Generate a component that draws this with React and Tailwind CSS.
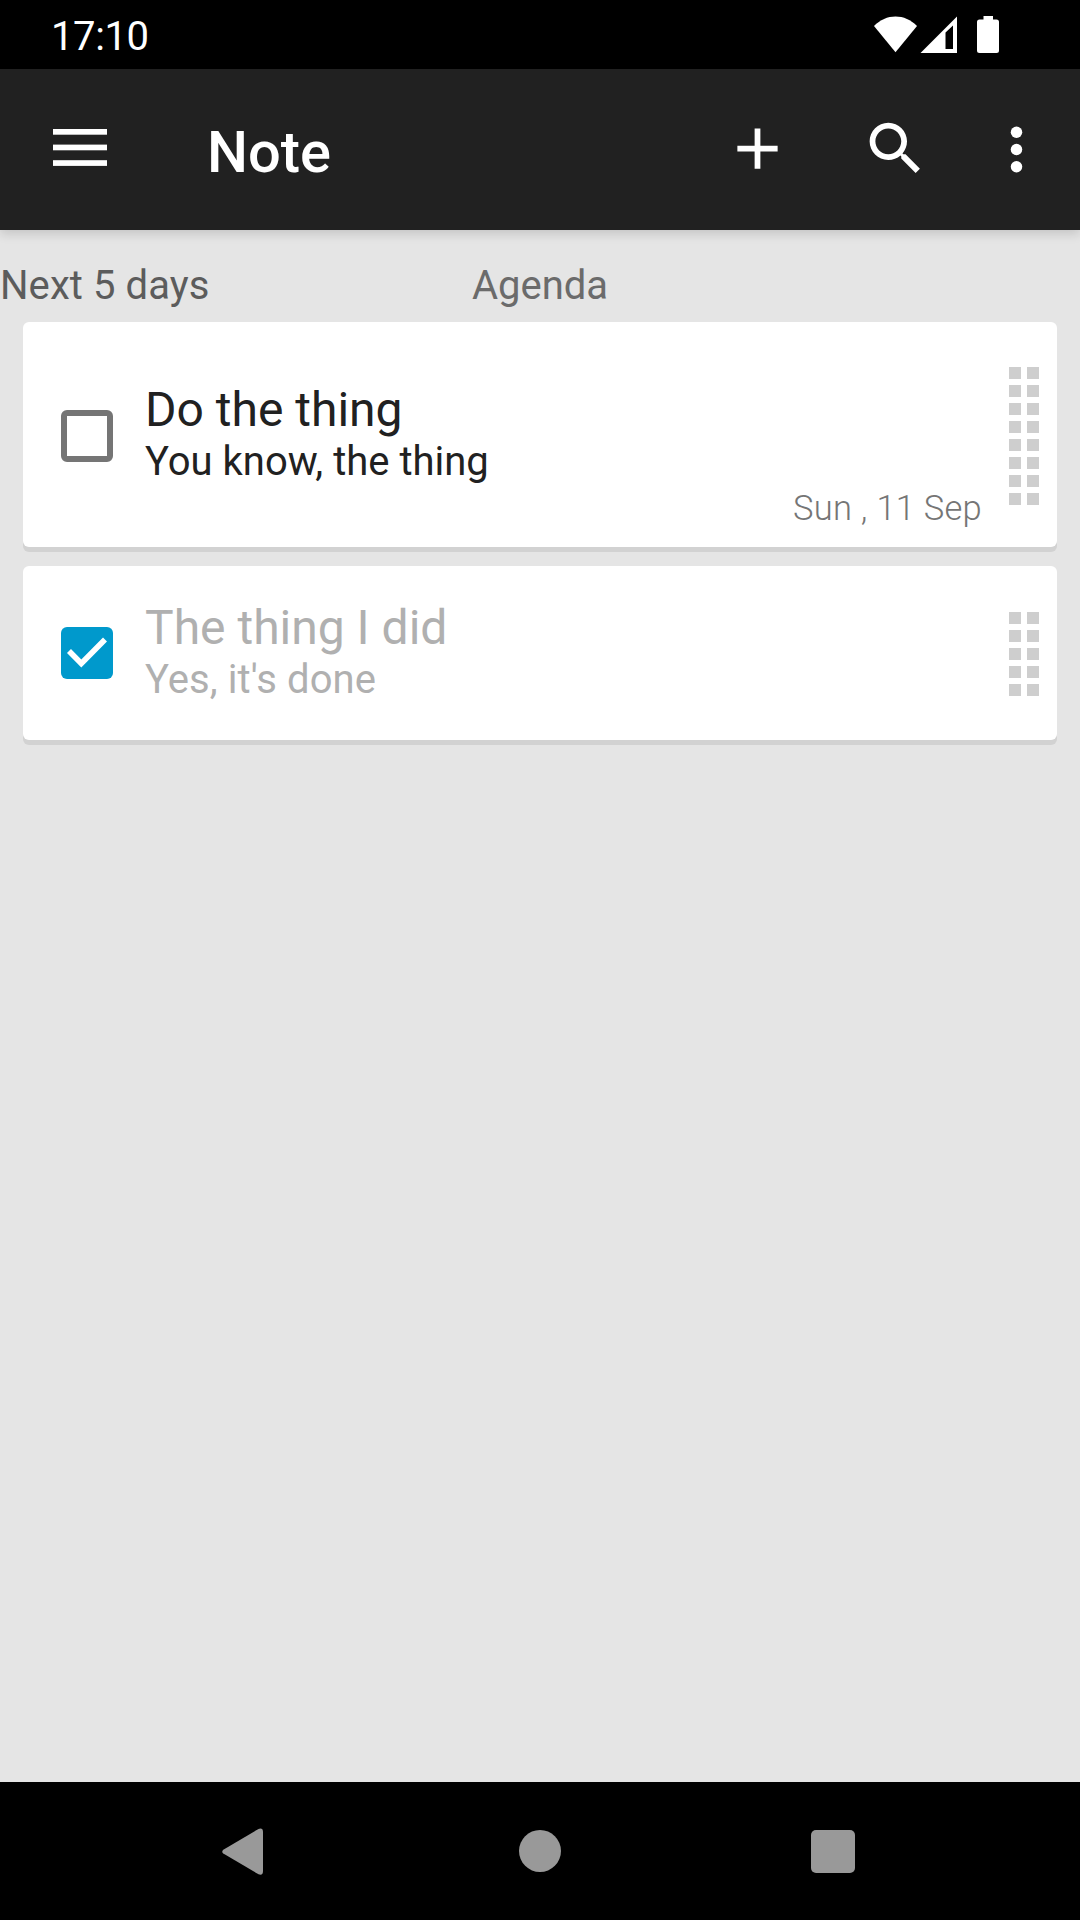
function Grip({ rows }) {
  return (
    <div className="grid grid-cols-2 gap-[6px] w-[30px]">
      {Array.from({ length: rows * 2 }, (_, i) => (
        <span key={i} className="h-[12px] w-[12px] bg-[#cecece]" />
      ))}
    </div>
  );
}

function StatusBar() {
  return (
    <header className="flex h-[69px] items-center justify-between bg-black pl-[51px] pr-[81px] text-white">
      <span className="pt-[4px] text-[40px] leading-[47px] tracking-[-0.4px]">17:10</span>
      <svg width="125" height="37" viewBox="874 16 125 37" fill="#fff">
        <path d="M874 26 C886 13.200 905 13.200 917 26 L895.500 52.200 Z" />
        <path fillRule="evenodd" d="M920.500 53 L957 16.500 V53 Z M945.500 32.500 V49 H953 V25.500 Z" />
        <path d="M983.500 16 H993 V19.500 H996.500 Q999 19.500 999 22 V50.500 Q999 53 996.500 53 H979.500 Q977 53 977 50.500 V22 Q977 19.500 979.500 19.500 H983.500 Z" />
      </svg>
    </header>
  );
}

function AppBar() {
  return (
    <div className="relative flex h-[161px] items-start bg-[#212121] text-white shadow-[0_4px_10px_rgba(0,0,0,0.14)]">
      <svg className="ml-[53px] mt-[60px]" width="54" height="38" fill="#fff">
        <rect width="54" height="5.700" />
        <rect y="15.600" width="54" height="5.700" />
        <rect y="31.200" width="54" height="5.700" />
      </svg>
      <h1 className="ml-[100px] mt-[49px] flex-1 text-[57.8px] font-medium leading-[68px]">Note</h1>
      <svg className="mr-[69px] mt-[45px]" width="69" height="69" viewBox="0 0 24 24" fill="#fff">
        <path d="M19 13h-6v6h-2v-6H5v-2h6V5h2v6h6v2z" />
      </svg>
      <svg className="mr-[52px] mt-[45px]" width="69" height="69" viewBox="0 0 24 24" fill="#fff">
        <path d="M15.500 14h-.79l-.28-.27C15.410 12.590 16 11.110 16 9.500 16 5.910 13.090 3 9.500 3S3 5.910 3 9.500 5.910 16 9.500 16c1.610 0 3.090-.59 4.230-1.570l.27.28v.79l5 4.990L20.490 19l-4.990-5zm-6 0C7.010 14 5 11.990 5 9.500S7.010 5 9.500 5 14 7.010 14 9.500 11.990 14 9.500 14z" />
      </svg>
      <svg className="mr-[29px] mt-[46px]" width="69" height="69" viewBox="0 0 24 24" fill="#fff">
        <circle cx="12" cy="6" r="2" />
        <circle cx="12" cy="12" r="2" />
        <circle cx="12" cy="18" r="2" />
      </svg>
    </div>
  );
}

function Checkbox({ checked }) {
  if (!checked) {
    return <span className="block h-[52px] w-[52px] rounded-[6px] border-[6px] border-[#757575]" />;
  }
  return (
    <span className="block h-[52px] w-[52px] rounded-[6px] bg-[#0099cc]">
      <svg width="52" height="52" viewBox="0 0 52 52" fill="none" stroke="#fff" strokeWidth="5.600">
        <path d="M8 24 L20.300 36.500 L44 12.500" />
      </svg>
    </span>
  );
}

export default function App() {
  return (
    <div className="flex h-[1920px] w-[1080px] flex-col overflow-hidden bg-[#e5e5e5] font-[Roboto,sans-serif]">
      <StatusBar />
      <AppBar />
      <main className="flex-1">
        <div className="grid h-[92px] grid-cols-3 pt-[32px] text-[40px] leading-[48px]">
          <span className="tracking-[0.08px] text-[#5c5c5c]">Next 5 days</span>
          <span className="text-center text-[#6b6b6b]">Agenda</span>
        </div>
        <section className="mx-[23px] flex h-[225px] rounded-[6px] bg-white shadow-[0_5px_0_#d2d2d2]">
          <div className="ml-[38px] mt-[88px]">
            <Checkbox />
          </div>
          <div className="ml-[32px] flex flex-1 flex-col text-[#212121]">
            <h2 className="mt-[59px] text-[48px] leading-[58px]">Do the thing</h2>
            <p className="-mt-px text-[40px] leading-[48px]">You know, the thing</p>
            <p className="mt-[2px] text-right text-[34.5px] font-light leading-[40px] tracking-[0.25px] text-[#757575]">Sun , 11 Sep</p>
          </div>
          <div className="ml-[27px] mr-[18px] mt-[45px]">
            <Grip rows={8} />
          </div>
        </section>
        <section className="mx-[23px] mt-[19px] flex h-[174px] rounded-[6px] bg-white shadow-[0_5px_0_#d2d2d2]">
          <div className="ml-[38px] mt-[61px]">
            <Checkbox checked />
          </div>
          <div className="ml-[32px] flex flex-1 flex-col text-[#b0b0b0]">
            <h2 className="mt-[33px] text-[48px] leading-[58px]">The thing I did</h2>
            <p className="-mt-px text-[40px] leading-[48px] tracking-[0.08px]">Yes, it's done</p>
          </div>
          <div className="ml-[27px] mr-[18px] mt-[46px]">
            <Grip rows={5} />
          </div>
        </section>
      </main>
      <nav className="flex h-[138px] items-center bg-black pl-[222px] text-[#999999]">
        <svg className="mt-[2px]" width="41" height="48" viewBox="0 0 41 48" fill="currentColor">
          <path d="M1.300 21.800 L36.500 0.900 Q41 -0.500 41 4 V43 Q41 48 36.500 46.300 L1.300 25.600 Q-0.800 23.700 1.300 21.800 Z" />
        </svg>
        <span className="ml-[256px] h-[42px] w-[42px] rounded-full bg-[#999999]" />
        <span className="ml-[250.4px] mt-[0.8px] h-[43.6px] w-[43.6px] rounded-[5px] bg-[#999999]" />
      </nav>
    </div>
  );
}
